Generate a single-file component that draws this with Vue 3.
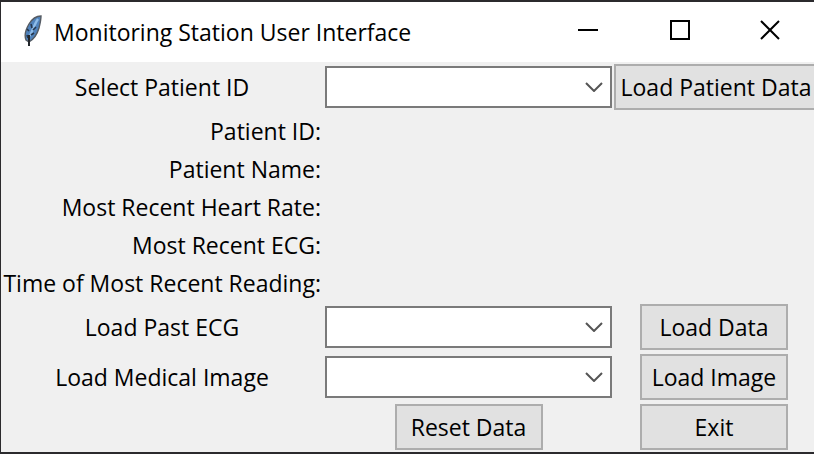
<script setup>
import { ref } from 'vue'

const patient = ref('')
const pastEcg = ref('')
const medicalImage = ref('')

const readings = [
  'Patient ID:',
  'Patient Name:',
  'Most Recent Heart Rate:',
  'Most Recent ECG:',
  'Time of Most Recent Reading:',
]

function reset() {
  patient.value = ''
  pastEcg.value = ''
  medicalImage.value = ''
}
</script>

<template>
  <main class="window">
    <header class="titlebar">
      <svg class="feather" viewBox="0 0 20 34" aria-hidden="true">
        <path d="M18 1 C13 1 9 4 6 9 C3 14 1 20 3 25 L6 27 C11 24 14 20 16 13 C17 9 18 5 18 1 Z" fill="#4f82bb" stroke="#555b63" stroke-width="1.4" />
        <path d="M15 4 C12 8 10 14 7 21" fill="none" stroke="#8dbbe8" stroke-width="2.4" />
        <path d="M4 14 L6 16 M8 9 L9 13 M13 12 L10 15 M11 18 L8 20 M4 20 L5 23" stroke="#25364d" stroke-width="1.6" />
        <path d="M6 20 L6 31" stroke="#23262b" stroke-width="2" />
      </svg>
      <h1 class="title">Monitoring Station User Interface</h1>
      <div class="controls">
        <button class="control" type="button" aria-label="Minimize">
          <svg viewBox="0 0 20 20"><path d="M0 10H20" /></svg>
        </button>
        <button class="control" type="button" aria-label="Maximize">
          <svg viewBox="0 0 20 20"><path d="M1 1H19V19H1Z" /></svg>
        </button>
        <button class="control" type="button" aria-label="Close">
          <svg viewBox="0 0 20 20"><path d="M1 1L19 19M19 1L1 19" /></svg>
        </button>
      </div>
    </header>

    <form class="form" @submit.prevent>
      <div class="row">
        <label class="label" for="patient">Select Patient ID</label>
        <div class="combo">
          <select id="patient" v-model="patient"><option value=""></option></select>
          <svg class="chevron" viewBox="0 0 18 10" aria-hidden="true"><path d="M1 1L9 9L17 1" /></svg>
        </div>
        <button class="button wide" type="button">Load Patient Data</button>
      </div>

      <div v-for="name in readings" :key="name" class="row reading">
        <span class="name">{{ name }}</span>
        <output></output>
      </div>

      <div class="row">
        <label class="label" for="ecg">Load Past ECG</label>
        <div class="combo">
          <select id="ecg" v-model="pastEcg"><option value=""></option></select>
          <svg class="chevron" viewBox="0 0 18 10" aria-hidden="true"><path d="M1 1L9 9L17 1" /></svg>
        </div>
        <button class="button" type="button">Load Data</button>
      </div>

      <div class="row">
        <label class="label" for="image">Load Medical Image</label>
        <div class="combo">
          <select id="image" v-model="medicalImage"><option value=""></option></select>
          <svg class="chevron" viewBox="0 0 18 10" aria-hidden="true"><path d="M1 1L9 9L17 1" /></svg>
        </div>
        <button class="button" type="button">Load Image</button>
      </div>

      <div class="row">
        <span></span>
        <button class="button" type="button" @click="reset">Reset Data</button>
        <button class="button" type="button">Exit</button>
      </div>
    </form>
  </main>
</template>

<style>
body {
  background: #2b2a2d;
}
</style>

<style scoped>
.window {
  padding: 2px 0 2px 1px;
  overflow: hidden;
  color: #000;
  background: #2b2a2d;
  font-family: "Open Sans", "Noto Sans", sans-serif;
  font-size: 23px;
  line-height: 32px;
}

.titlebar {
  display: flex;
  align-items: center;
  height: 60px;
  padding-left: 22px;
  background: #fff;
}

.feather {
  width: 20px;
  height: 34px;
  flex: none;
}

.title {
  flex: 1;
  margin: 0;
  padding-left: 11px;
  font-size: 23px;
  font-weight: 400;
  white-space: nowrap;
}

.controls {
  display: flex;
  padding-bottom: 4px;
}

.control {
  display: flex;
  align-items: center;
  justify-content: center;
  width: 92px;
  height: 56px;
  padding: 0;
  border: 0;
  background: none;
}

.control:last-child {
  width: 88px;
}

.control svg {
  width: 20px;
  height: 20px;
  fill: none;
  stroke: #000;
  stroke-width: 2;
}

.form {
  background: #f0f0f0;
}

.row {
  display: grid;
  grid-template-columns: minmax(0, 322fr) minmax(0, 291fr) minmax(0, 200fr);
  align-items: center;
  min-height: 50px;
}

.reading {
  min-height: 38px;
}

.label {
  text-align: center;
}

.name {
  padding-right: 2px;
  text-align: right;
  white-space: nowrap;
}

.combo {
  position: relative;
  margin: 0 2px;
}

select {
  display: block;
  width: 100%;
  height: 42px;
  padding: 0 36px 0 6px;
  border: 2px solid #7a7a7a;
  border-radius: 0;
  background: #fff;
  font: inherit;
  appearance: none;
}

.chevron {
  position: absolute;
  top: 16px;
  right: 9px;
  width: 18px;
  height: 10px;
  fill: none;
  stroke: #555;
  stroke-width: 2;
  pointer-events: none;
}

.button {
  justify-self: center;
  width: 148px;
  height: 46px;
  padding: 0;
  border: 2px solid #adadad;
  border-radius: 0;
  color: #000;
  background: #e1e1e1;
  font: inherit;
  white-space: nowrap;
}

.wide {
  justify-self: start;
  width: 204px;
}
</style>
